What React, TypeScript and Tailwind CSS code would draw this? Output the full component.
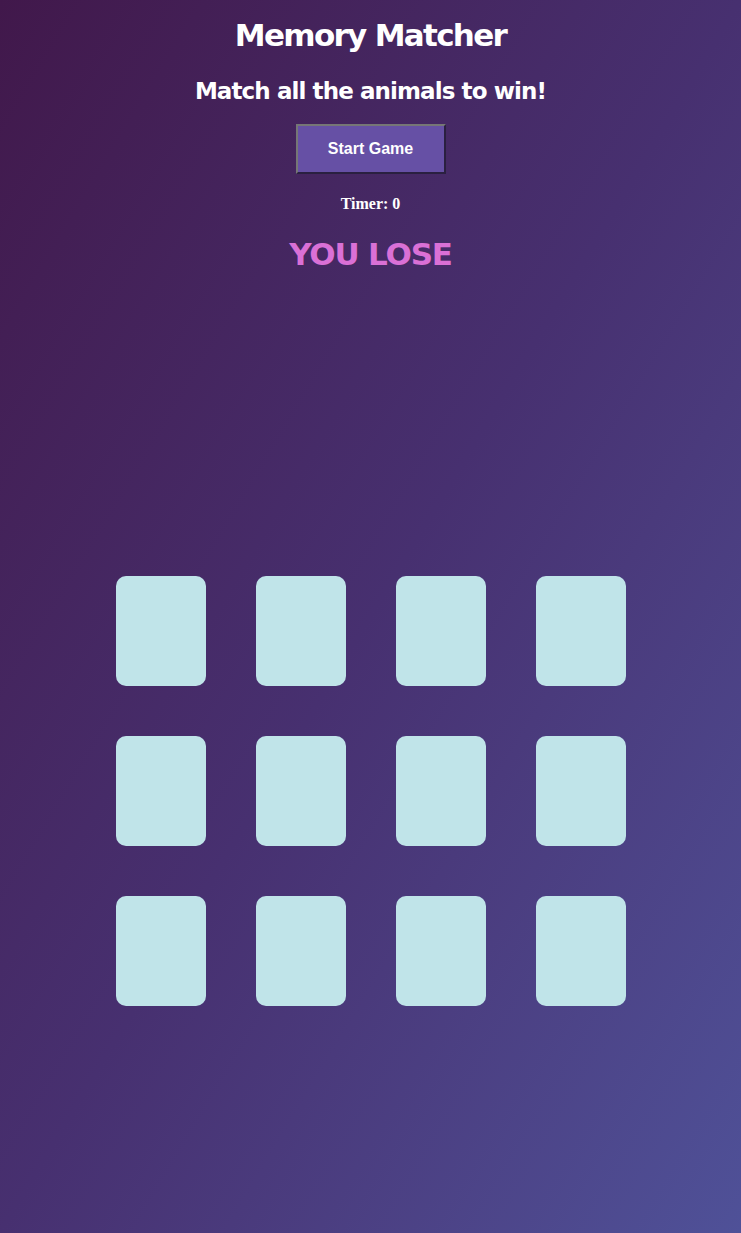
import React from 'react';

const cards = Array.from({ length: 12 }, (_, i) => i);

export default function App() {
  return (
    <div className="min-h-[1233px] w-full bg-gradient-to-br from-[#41184b] via-[#473070] to-[#4f5198] flex flex-col items-center">
      <h1 className="mt-[15px] text-[31px] leading-[40px] font-bold text-white font-['DejaVu_Sans',sans-serif] tracking-[-1.7px]">
        Memory Matcher
      </h1>
      <h2 className="mt-[21px] text-[23px] leading-[30px] font-bold text-white font-['DejaVu_Sans',sans-serif] tracking-[-0.9px]">
        Match all the animals to win!
      </h2>
      <button className="mt-[18px] w-[150px] h-[50px] bg-[#6650a5] border-2 border-t-[#767676] border-l-[#767676] border-r-[#2a2040] border-b-[#2a2040] text-white text-[16px] font-bold font-['Liberation_Sans',Arial,sans-serif]">
        Start Game
      </button>
      <p className="mt-[20px] text-[16px] leading-[20px] font-bold text-white font-['Liberation_Serif','Times_New_Roman',serif]">
        Timer: 0
      </p>
      <p className="mt-[20px] text-[31px] leading-[40px] font-bold text-[#da70d6] font-['DejaVu_Sans',sans-serif] tracking-[-1.2px]">
        YOU LOSE
      </p>
      <div className="mt-[302px] grid grid-cols-4 gap-[50px]">
        {cards.map((c) => (
          <div key={c} className="w-[90px] h-[110px] rounded-[10px] bg-[#c0e4e9]" />
        ))}
      </div>
    </div>
  );
}
